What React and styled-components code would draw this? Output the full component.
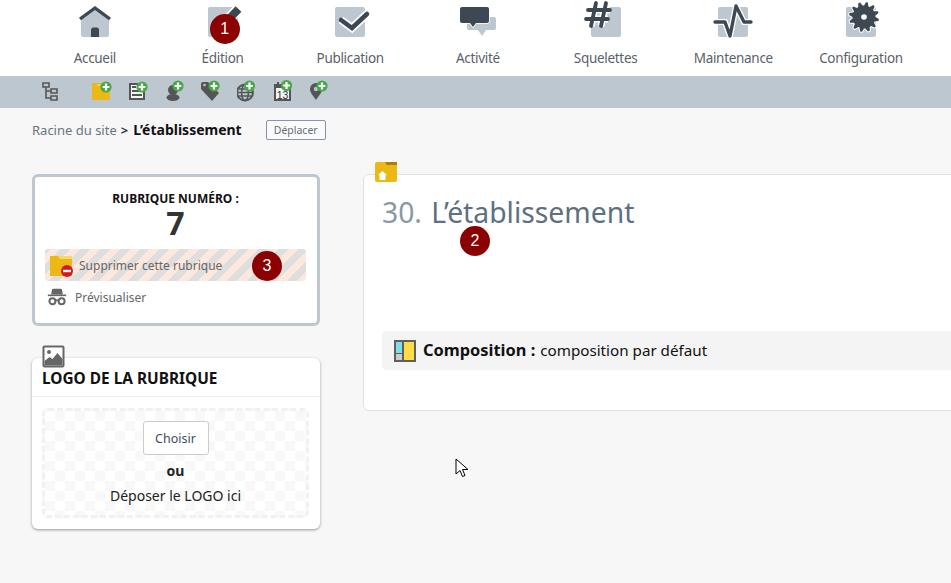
import React from "react";
import styled, { createGlobalStyle } from "styled-components";

const DARK = "#3e4852";
const SOFT = "#bdc7d0";

const Global = createGlobalStyle`
  html, body { margin: 0; height: 100%; overflow: hidden; background: #f7f7f7; }
  body { font-family: "Noto Sans", "DejaVu Sans", sans-serif; color: #222; }
`;

const Plus = ({ cx = 13, cy = 7 }) => (
  <g>
    <circle cx={cx} cy={cy} r="5.6" fill="#46a846" />
    <path d={`M${cx - 3.4} ${cy}H${cx + 3.4}M${cx} ${cy - 3.4}V${cy + 3.4}`} stroke="#fff" strokeWidth="2.2" />
  </g>
);

const Square = () => <rect x="15" y="7" width="30" height="30" rx="2" fill={SOFT} />;

// 12 toothed gear outline around (33, 17)
const gearPoints = () => {
  const pts = [];
  for (let i = 0; i < 48; i++) {
    const a = (i / 48) * Math.PI * 2 + Math.PI / 24;
    const r = i % 4 < 2 ? 15 : 11.5;
    pts.push(`${(33 + r * Math.cos(a)).toFixed(2)},${(17 + r * Math.sin(a)).toFixed(2)}`);
  }
  return pts.join(" ");
};

const navIcons = {
  home: (
    <>
      <path d="M16 20L30 8l14 12v15a2 2 0 0 1-2 2H18a2 2 0 0 1-2-2z" fill={SOFT} />
      <path d="M15 19L30 8l15 11" fill="none" stroke={DARK} strokeWidth="3.4" />
      <path d="M26 37V30a2.500 2.500 0 0 1 2.500-2.500h3A2.500 2.500 0 0 1 34 30v7z" fill={DARK} />
    </>
  ),
  edit: (
    <>
      <Square />
      <path d="M34 21L46 8" stroke="#fff" strokeWidth="11" />
      <path d="M35 20L45.500 9" stroke={DARK} strokeWidth="8" />
    </>
  ),
  check: (
    <>
      <Square />
      <path d="M21 20l11 8 15-14" fill="none" stroke="#fff" strokeWidth="8" />
      <path d="M21 20l11 8 15-14" fill="none" stroke={DARK} strokeWidth="4.500" strokeLinecap="round" />
    </>
  ),
  chat: (
    <>
      <path d="M21 17h25a2 2 0 0 1 2 2v9a2 2 0 0 1-2 2h-8l-4 6-4-6h-9a2 2 0 0 1-2-2v-9a2 2 0 0 1 2-2z" fill={SOFT} />
      <path d="M14 7h25a2 2 0 0 1 2 2v12a2 2 0 0 1-2 2H28l-3 4-3-4h-8a2 2 0 0 1-2-2V9a2 2 0 0 1 2-2z" fill={DARK} stroke="#fff" strokeWidth="1.500" paintOrder="stroke" />
    </>
  ),
  hash: (
    <>
      <Square />
      <path d="M20 3l-5 23M30 3l-5 23M12 10h22M10 19h22" fill="none" stroke="#fff" strokeWidth="7" />
      <path d="M20 3l-5 23M30 3l-5 23M12 10h22M10 19h22" fill="none" stroke={DARK} strokeWidth="3.800" strokeLinecap="round" />
    </>
  ),
  pulse: (
    <>
      <Square />
      <path d="M12 22H22L27 36 33 6 41 22H48" fill="none" stroke="#fff" strokeWidth="6" />
      <path d="M12 22H22L27 36 33 6 41 22H48" fill="none" stroke={DARK} strokeWidth="3.400" strokeLinecap="round" strokeLinejoin="round" />
    </>
  ),
  gear: (
    <>
      <Square />
      <polygon points={gearPoints()} fill={DARK} stroke="#fff" strokeWidth="2" paintOrder="stroke" strokeLinejoin="round" />
      <circle cx="33" cy="17" r="2.800" fill="#fff" />
    </>
  ),
};

const navItems = [
  ["Accueil", "home"],
  ["Édition", "edit", 1],
  ["Publication", "check"],
  ["Activité", "chat"],
  ["Squelettes", "hash"],
  ["Maintenance", "pulse"],
  ["Configuration", "gear"],
];

const GREY = "#555";
const subIcons = [
  <path d="M1 4h6v4H1zM9 10h6v4H9zM9 17h6v4H9zM4 8v11h5M4 12h5" fill="none" stroke={GREY} strokeWidth="1.600" />,
  <>
    <path d="M0 4h18v17H0z" fill="#ecb816" />
    <path d="M5 6h6" stroke="#f7e29a" strokeWidth="1" />
    <Plus cx={14} cy={8} />
  </>,
  <>
    <path d="M1 5h14v15H1z" fill="#f4f4f4" stroke={GREY} strokeWidth="2" />
    <path d="M3 8h4M3 12h10M3 16h10" stroke={GREY} strokeWidth="2" />
    <Plus cx={13} cy={8} />
  </>,
  <>
    <circle cx="8" cy="11" r="5" fill={GREY} />
    <ellipse cx="8" cy="18.500" rx="6.500" ry="3.500" fill={GREY} />
    <Plus cx={13} cy={7} />
  </>,
  <>
    <path d="M0 5a2 2 0 0 1 2-2h5l11 11-7 8L0 10z" fill={GREY} />
    <circle cx="3.500" cy="6" r="1.300" fill={SOFT} />
    <Plus cx={13} cy={7} />
  </>,
  <>
    <circle cx="8" cy="13.500" r="8" fill="none" stroke={GREY} strokeWidth="2" />
    <ellipse cx="8" cy="13.500" rx="3.400" ry="8" fill="none" stroke={GREY} strokeWidth="1.500" />
    <path d="M0.500 13.500h15M2 10h12M2 17h12" stroke={GREY} strokeWidth="1.300" />
    <Plus cx={12.500} cy={7} />
  </>,
  <>
    <path d="M1 6h15v15H1z" fill="#f4f4f4" stroke={GREY} strokeWidth="2" />
    <path d="M1 6h15v3H1zM3 3h2v4H3z" fill={GREY} />
    <text x="8.500" y="19.500" fontSize="10.500" textAnchor="middle" fill="#333" fontFamily="Liberation Sans, sans-serif">13</text>
    <Plus cx={12.500} cy={6.500} />
  </>,
  <>
    <path d="M6 4a6 6 0 0 1 6 6c0 4-3.500 7-6 11-2.500-4-6-7-6-11a6 6 0 0 1 6-6z" fill={GREY} />
    <circle cx="6" cy="10" r="2.200" fill={SOFT} />
    <Plus cx={12} cy={7} />
  </>,
];

const Page = styled.div`
  position: relative;
  width: 951px;
  height: 583px;
  overflow: hidden;
`;

const TopBar = styled.nav`
  display: grid;
  grid-template-columns: repeat(7, 127.7px);
  height: 76px;
  padding-left: 31px;
  background: #fff;
`;

const NavItem = styled.a`
  position: relative;
  display: flex;
  flex-direction: column;
  align-items: center;
  font-size: 13.5px;
  letter-spacing: -0.3px;
  line-height: 19px;
  color: #5b6169;
`;

const NavIcon = styled.svg`
  width: 60px;
  height: 40px;
  margin-bottom: 9px;
  flex: none;
  overflow: visible;
`;

const Badge = styled.span`
  position: absolute;
  display: flex;
  align-items: center;
  justify-content: center;
  width: 30px;
  height: 30px;
  border-radius: 50%;
  background: #8b0000;
  color: #fff;
  letter-spacing: 0;
  font: 16px/1 "Liberation Sans", sans-serif;
  top: ${(p) => p.$top}px;
  left: ${(p) => p.$left}px;
`;

const SubBar = styled.div`
  display: flex;
  gap: 10.3px;
  height: 32px;
  padding-left: 42px;
  background: ${SOFT};
`;

const SubIcon = styled.svg`
  width: 26px;
  height: 24px;
  flex: none;
  margin-top: 3px;
  margin-right: ${(p) => p.$gap || 0}px;
`;

const Crumbs = styled.div`
  display: flex;
  align-items: center;
  height: 43px;
  padding: 0 0 0 32px;
  font-size: 13px;
  color: #6a7480;
`;

const Current = styled.strong`
  color: #111;
  font-size: 14px;
  margin-left: 5px;
`;

const Sep = styled.span`
  color: #333;
  font-weight: 700;
  margin-left: 4px;
`;

const MoveButton = styled.button`
  margin-left: 24px;
  width: 60px;
  height: 20px;
  padding: 0;
  font: 10.5px "Noto Sans", sans-serif;
  color: #666f79;
  background: #fafafa;
  border: 1px solid #8695a8;
  border-radius: 2px;
`;

const Columns = styled.div`
  display: grid;
  grid-template-columns: 288px 640px;
  gap: 43px;
  padding: 23px 0 0 32px;
  align-items: start;
`;

const Side = styled.aside`
  display: flex;
  flex-direction: column;
  gap: 32px;
`;

const InfoBox = styled.section`
  position: relative;
  box-sizing: border-box;
  height: 152px;
  padding: 14px 11px 0 10px;
  background: #fff;
  border: 3px solid ${SOFT};
  border-radius: 6px;
  text-align: center;
`;

const InfoLabel = styled.div`
  font-size: 12px;
  font-weight: 700;
  line-height: 16px;
  color: #111;
`;

const InfoNumber = styled.div`
  font-size: 32px;
  font-weight: 700;
  line-height: 32px;
  color: #333;
`;

const DeleteRow = styled.div`
  display: flex;
  align-items: center;
  height: 32px;
  margin-top: 10px;
  padding-left: 5px;
  border-radius: 3px;
  font-size: 12px;
  line-height: 18px;
  color: #666;
  background: repeating-linear-gradient(-45deg, #fde8dd 0 7px, #dedede 7px 14px);
`;

const DeleteLabel = styled.span`
  padding-top: 1px;
`;

const PreviewRow = styled.div`
  display: flex;
  align-items: center;
  height: 32px;
  padding-left: 2px;
  font-size: 12px;
  color: #666;
`;

const RowIcon = styled.svg`
  width: ${(p) => p.$size}px;
  height: ${(p) => p.$size}px;
  margin-right: ${(p) => p.$gap}px;
  flex: none;
`;

const LogoCard = styled.section`
  position: relative;
  height: 171px;
  background: #fff;
  border-radius: 6px;
  box-shadow: 0 1px 3px rgba(0, 0, 0, 0.4);
`;

const CornerIcon = styled.svg`
  position: absolute;
  left: ${(p) => p.$left}px;
  top: ${(p) => p.$top}px;
  width: ${(p) => p.$w}px;
  height: ${(p) => p.$w}px;
`;

const CardTitle = styled.h3`
  height: 39px;
  margin: 0;
  padding: 0 10px;
  box-sizing: border-box;
  font-size: 15.4px;
  line-height: 41px;
  color: #111;
  border-bottom: 1px solid #eee;
`;

const DropZone = styled.div`
  box-sizing: border-box;
  display: flex;
  flex-direction: column;
  align-items: center;
  height: 110px;
  margin: 11px 11px 0 10px;
  padding-top: 10px;
  border: 3px dashed #f1f1f1;
  border-radius: 6px;
  font-size: 14px;
  color: #222;
  background: repeating-conic-gradient(#f8f8f8 0 25%, #fff 0 50%) 0 0 / 20px 20px;
`;

const ChooseButton = styled.button`
  width: 66px;
  height: 34px;
  padding: 0;
  font: 12.5px "Noto Sans", sans-serif;
  color: #3d4c5e;
  background: #fff;
  border: 1px solid #ccc;
  border-radius: 3px;
`;

const Or = styled.strong`
  margin-top: 6px;
  font-size: 14px;
  line-height: 20px;
`;

const DropText = styled.div`
  margin-top: 5px;
  line-height: 20px;
`;

const MainCard = styled.main`
  position: relative;
  box-sizing: border-box;
  height: 237px;
  padding: 18px 0 0 18px;
  background: #fff;
  border: 1px solid #e2e2e2;
  border-radius: 6px;
`;

const Title = styled.h1`
  margin: 0;
  font-size: 28.3px;
  font-weight: 400;
  line-height: 38px;
  word-spacing: 2px;
  color: #5d7082;
`;

const TitleNumber = styled.span`
  color: #8a98a6;
`;

const Composition = styled.div`
  display: flex;
  align-items: center;
  height: 39px;
  margin-top: 100px;
  padding-left: 12px;
  border-radius: 5px;
  background: #f4f4f4;
  font-size: 15.2px;
  color: #111;
`;

const CompositionIcon = styled.svg`
  width: 22px;
  height: 22px;
  margin-right: 7px;
  flex: none;
`;

const CompositionText = styled.span`
  padding-bottom: 3px;
`;

const CompositionLabel = styled.strong`
  font-size: 16.4px;
  margin-right: 1px;
`;

const Pointer = styled.svg`
  position: absolute;
  left: 455px;
  top: 458px;
  width: 14px;
  height: 20px;
`;

export default function App() {
  return (
    <Page>
      <Global />
      <TopBar>
        {navItems.map(([label, icon, badge]) => (
          <NavItem key={label}>
            <NavIcon viewBox="0 0 60 40">{navIcons[icon]}</NavIcon>
            {label}
            {badge && <Badge $top={14} $left={51}>{badge}</Badge>}
          </NavItem>
        ))}
      </TopBar>
      <SubBar>
        {subIcons.map((icon, i) => (
          <SubIcon key={i} viewBox="0 0 26 24" $gap={i === 0 ? 14 : 0}>{icon}</SubIcon>
        ))}
      </SubBar>
      <Crumbs>
        Racine du site <Sep>&gt;</Sep> <Current>L’établissement</Current>
        <MoveButton>Déplacer</MoveButton>
      </Crumbs>
      <Columns>
        <Side>
          <InfoBox>
            <InfoLabel>RUBRIQUE NUMÉRO :</InfoLabel>
            <InfoNumber>7</InfoNumber>
            <DeleteRow>
              <RowIcon viewBox="0 0 24 24" $size={24} $gap={5}>
                <path d="M0 3h22v20H0z" fill="#ecb816" />
                <path d="M8 3h14v3H10z" fill="#f7d96a" />
                <circle cx="17" cy="18" r="6" fill="#d9161e" />
                <path d="M13 18h8" stroke="#fff" strokeWidth="2.400" />
              </RowIcon>
              <DeleteLabel>Supprimer cette rubrique</DeleteLabel>
            </DeleteRow>
            <PreviewRow>
              <RowIcon viewBox="0 0 24 24" $size={20} $gap={8}>
                <path d="M5 9l1-6a2 2 0 0 1 2-1h8a2 2 0 0 1 2 1l1 6z" fill="#666" />
                <path d="M1 10h22" stroke="#666" strokeWidth="2" />
                <circle cx="6.500" cy="17" r="3.600" fill="none" stroke="#666" strokeWidth="2.400" />
                <circle cx="17.500" cy="17" r="3.600" fill="none" stroke="#666" strokeWidth="2.400" />
                <path d="M10 16h4" stroke="#666" strokeWidth="2" />
              </RowIcon>
              Prévisualiser
            </PreviewRow>
            <Badge $top={74} $left={217}>3</Badge>
          </InfoBox>
          <LogoCard>
            <CornerIcon viewBox="0 0 23 23" $left={10} $top={-13} $w={23}>
              <rect x="0.500" y="0.500" width="22" height="22" rx="2" fill="#666" />
              <rect x="2.500" y="2.500" width="18" height="18" fill="#fff" />
              <circle cx="7" cy="7" r="2" fill="#666" />
              <path d="M2.500 16l5-4 3 2 5-6 5 6v6.500h-18z" fill="#666" />
            </CornerIcon>
            <CardTitle>LOGO DE LA RUBRIQUE</CardTitle>
            <DropZone>
              <ChooseButton>Choisir</ChooseButton>
              <Or>ou</Or>
              <DropText>Déposer le LOGO ici</DropText>
            </DropZone>
          </LogoCard>
        </Side>
        <MainCard>
          <CornerIcon viewBox="0 0 22 20" $left={11} $top={-14} $w={22}>
            <rect width="22" height="20" rx="2" fill="#ecb816" />
            <path d="M10 0h12v3H12z" fill="#a97f08" />
            <path d="M3 13l4.500-4 4.500 4h-1.500v5h-6v-5z" fill="#fff" />
          </CornerIcon>
          <Title><TitleNumber>30.</TitleNumber> L’établissement</Title>
          <Badge $top={51} $left={96}>2</Badge>
          <Composition>
            <CompositionIcon viewBox="0 0 22 22">
              <rect width="22" height="22" fill="#5f5f5f" />
              <rect x="2" y="2" width="6" height="11" fill="#7fdde6" />
              <rect x="2" y="14" width="6" height="6" fill="#ccc" />
              <rect x="10" y="2" width="10" height="18" fill="#ffdc45" />
            </CompositionIcon>
            <CompositionText>
              <CompositionLabel>Composition :</CompositionLabel> composition par défaut
            </CompositionText>
          </Composition>
        </MainCard>
      </Columns>
      <Pointer viewBox="0 0 14 20">
        <path d="M1 1v15l4-3.500 2.500 6 2.500-1-2.500-6H13z" fill="#fff" stroke="#000" strokeWidth="1" />
      </Pointer>
    </Page>
  );
}
